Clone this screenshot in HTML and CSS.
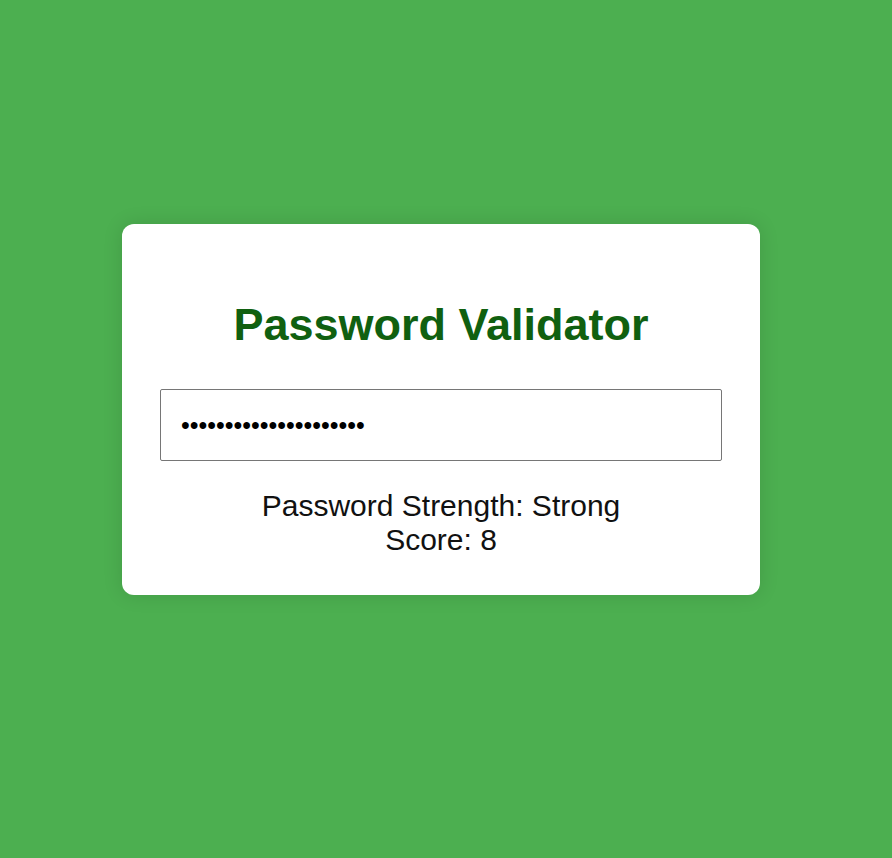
FILE: index.html
```html
<!DOCTYPE html>
<html lang="en">
<head>
<meta charset="utf-8">
<title>Password Validator</title>
<link rel="stylesheet" href="styles.css">
</head>
<body>
  <main class="card">
    <h1 class="title">Password Validator</h1>
    <input class="pw-input" type="password" value="aB3$efGh!jkLmN0pQr5tZ">
    <div class="result">
      <div>Password Strength: Strong</div>
      <div>Score: 8</div>
    </div>
  </main>
</body>
</html>
```

FILE: styles.css
```css
html, body {
  margin: 0;
  padding: 0;
}
body {
  min-height: 100vh;
  box-sizing: border-box;
  background: #4caf50;
  font-family: "Liberation Sans", Arial, sans-serif;
  display: flex;
  justify-content: center;
  align-items: center;
  padding: 0 10px 39px 0;
}
.card {
  width: 638px;
  box-sizing: border-box;
  background: #ffffff;
  border-radius: 12px;
  box-shadow: 0 0 20px rgba(0, 0, 0, 0.12);
  padding: 75px 38px 38px;
  text-align: center;
}
.title {
  margin: 0 0 38px;
  font-size: 45px;
  font-weight: bold;
  line-height: normal;
  color: #106010;
}
.pw-input {
  display: block;
  width: 100%;
  height: 72px;
  box-sizing: border-box;
  margin: 0;
  padding: 0 20px;
  border: 1px solid #767676;
  border-radius: 2px;
  font-family: "Liberation Sans", Arial, sans-serif;
  font-size: 25px;
  color: #000;
  background: #fff;
  outline: none;
}
.result {
  margin-top: 28px;
  font-size: 30px;
  line-height: normal;
  color: #111;
}
```
